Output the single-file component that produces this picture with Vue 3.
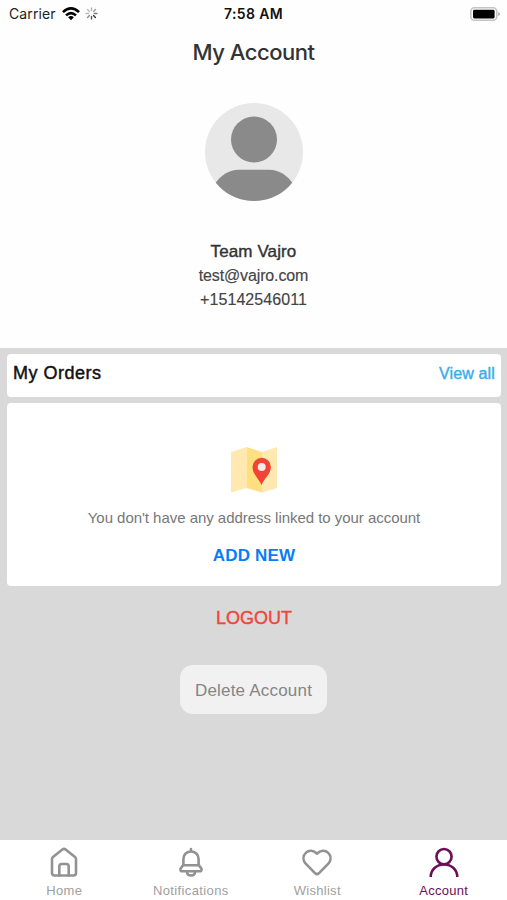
<script setup>
const spokes = [0, 1, 2, 3, 4, 5, 6, 7].map((i) => ({
  angle: i * 45,
  shade: [0.35, 0.45, 0.6, 0.9, 0.75, 0.5, 0.3, 0.3][i],
}))
const tabs = [
  { id: 'home', label: 'Home' },
  { id: 'notifications', label: 'Notifications' },
  { id: 'wishlist', label: 'Wishlist' },
  { id: 'account', label: 'Account' },
]
const active = 'account'
</script>

<template>
  <div class="screen">
    <header class="status">
      <div class="carrier">
        <span>Carrier</span>
        <svg class="wifi" width="18" height="14" viewBox="0 0 18 14">
          <g fill="none" stroke="#000" stroke-width="2.6">
            <path d="M1 5.1Q9-2.3 17 5.1" />
            <path d="M4 8.4Q9 3.8 14 8.4" />
          </g>
          <path d="M6.1 10.2Q9 7.7 11.9 10.2L9 13.3Z" />
        </svg>
        <svg class="spinner" width="13" height="13" viewBox="-6.5 -6.5 13 13">
          <line
            v-for="s in spokes"
            :key="s.angle"
            x1="0" y1="-2.9" x2="0" y2="-5.5"
            stroke="#222" stroke-width="1.4" stroke-linecap="round"
            :opacity="s.shade"
            :transform="`rotate(${s.angle})`"
          />
        </svg>
      </div>
      <span class="time">7:58 AM</span>
      <div class="power">
        <svg width="30" height="14" viewBox="0 0 30 14">
          <rect x=".8" y=".8" width="26" height="12.4" rx="3.8" fill="#fff" stroke="#c4c4c4" stroke-width="1.6" />
          <rect x="3" y="2.8" width="21.6" height="8.6" rx="1.4" />
          <path d="M28.2 4.9Q30 5.6 30 7T28.2 9.1Z" fill="#aaa" />
        </svg>
      </div>
    </header>

    <h1 class="title">My Account</h1>

    <section class="profile">
      <svg class="avatar" width="98" height="98" viewBox="0 0 98 98">
        <defs><clipPath id="disc"><circle cx="49" cy="49" r="49" /></clipPath></defs>
        <g clip-path="url(#disc)">
          <rect width="98" height="98" fill="#e8e8e8" />
          <circle cx="49" cy="36.500" r="23" fill="#8a8a8a" />
          <path d="M9 82C16 72 24 66.800 34 66.800H64C74 66.800 82 72 89 82V98H9Z" fill="#8a8a8a" />
        </g>
      </svg>
      <p class="name">Team Vajro</p>
      <p class="email">test@vajro.com</p>
      <p class="phone">+15142546011</p>
    </section>

    <main class="content">
      <section class="card orders">
        <h2>My Orders</h2>
        <a class="view">View all</a>
      </section>
      <section class="card address">
        <svg class="map" width="46" height="46" viewBox="0 0 46 46">
          <path d="M0 5L15.500 0V41L0 45.500Z" fill="#ffe9b0" />
          <path d="M15.500 0L31 5V45.500L15.500 41Z" fill="#ffdf80" />
          <path d="M31 5L46 0V41L31 45.500Z" fill="#ffe9b0" />
          <path d="M30.500 38C27.500 31 21.500 27 21.500 20A9.200 9.200 0 0 1 39.900 20C39.900 27 33.500 31 30.500 38Z" fill="#f04435" />
          <circle cx="30.700" cy="20" r="4" fill="#fbe9e7" />
        </svg>
        <p class="empty">You don't have any address linked to your account</p>
        <a class="add">ADD NEW</a>
      </section>
      <a class="logout">LOGOUT</a>
      <button class="delete">Delete Account</button>
    </main>

    <nav class="tabs">
      <a v-for="tab in tabs" :key="tab.id" class="tab" :class="{ active: tab.id === active }">
        <svg width="32" height="32" viewBox="0 0 32 32" fill="none" stroke="currentColor" stroke-width="2.6" stroke-linejoin="round" stroke-linecap="round">
          <template v-if="tab.id === 'home'">
            <path d="M4 12.200Q4 10.900 5 10L14.400 2.500Q16 1.300 17.600 2.500L27 10Q28 10.900 28 12.200V26Q28 28.500 25.500 28.500H6.500Q4 28.500 4 26Z" />
            <path d="M11.300 28.500V19.500Q11.300 17 13.800 17H18.200Q20.700 17 20.700 19.500V28.500" />
          </template>
          <template v-else-if="tab.id === 'notifications'">
            <path d="M16 2V4.500M8.400 18V12C8.400 7.500 11.800 4.500 16 4.500S23.600 7.500 23.600 12V18" />
            <path d="M8 18.300H24L26.500 21.800V22.800Q26.500 24.300 25 24.300H7Q5.500 24.300 5.500 22.800V21.800Z" />
            <path d="M12 24.700C12 27.200 13.500 28.500 16 28.500S20 27.200 20 24.700" />
          </template>
          <path v-else-if="tab.id === 'wishlist'" d="M16 6.700C12.500 2.900 7.700 3 5 5.700C2 8.700 1.700 13 4.200 16.200L14.200 26.300Q16 27.900 17.800 26.300L27.800 16.200C30.300 13 30 8.700 27 5.700C24.300 3 19.500 2.900 16 6.700Z" />
          <template v-else>
            <circle cx="16" cy="9.600" r="7.600" />
            <path stroke-linecap="butt" d="M2.700 30C2.700 22.700 8.500 17.500 16 17.500S29.300 22.700 29.300 30" />
          </template>
        </svg>
        <span :class="tab.id">{{ tab.label }}</span>
      </a>
    </nav>
  </div>
</template>

<style>
body { margin: 0; background: #fff; }
</style>

<style scoped>
.screen {
  display: flex;
  flex-direction: column;
  width: 507px;
  height: 900px;
  overflow: hidden;
  background: #fefefe;
  font-family: "Liberation Sans", Arial, sans-serif;
  color: #333;
}
p, h1, h2 { margin: 0; font-weight: 400; }
.status {
  display: grid;
  grid-template-columns: 1fr auto 1fr;
  align-items: center;
  height: 27px;
  padding: 0 7px 0 9px;
  font: 14px/27px Inter, sans-serif;
  color: #222;
}
.carrier { display: flex; align-items: center; letter-spacing: .1px; }
.wifi { margin-left: 6px; }
.spinner { margin-left: 5px; }
.time { margin-right: 2px; font-weight: 600; font-size: 14px; letter-spacing: .35px; color: #111; }
.power { display: flex; justify-content: flex-end; }
.title {
  height: 50px;
  text-align: center;
  font: 500 22px/50px Inter, sans-serif;
  letter-spacing: -.5px;
  color: #333;
}
.profile {
  display: flex;
  flex-direction: column;
  align-items: center;
  height: 271px;
  padding-top: 26px;
  box-sizing: border-box;
}
.avatar { display: block; margin-bottom: 39px; flex: none; }
.profile p { line-height: 24px; font-size: 16px; color: #444; }
.profile .name { font-size: 17px; letter-spacing: .12px; color: #333; -webkit-text-stroke: .4px #333; }
.profile .email { letter-spacing: -.14px; -webkit-text-stroke: .15px #444; }
.profile .phone { letter-spacing: .06px; -webkit-text-stroke: .15px #444; }
.content {
  flex: 1;
  display: flex;
  flex-direction: column;
  align-items: center;
  padding: 6px 6px 0 7px;
  background: #d9d9d9;
}
.card { align-self: stretch; border-radius: 4px; background: #fff; }
.orders {
  display: flex;
  justify-content: space-between;
  align-items: flex-start;
  height: 43px;
  padding: 0 6px;
  margin-bottom: 6px;
  line-height: 39px;
}
.orders h2 { font-size: 18px; letter-spacing: .5px; color: #111; -webkit-text-stroke: .45px #111; }
.view { line-height: 40px; font-size: 16px; letter-spacing: .15px; color: #38adec; -webkit-text-stroke: .4px #38adec; }
.address {
  display: flex;
  flex-direction: column;
  align-items: center;
  height: 183px;
  box-sizing: border-box;
  padding-top: 44px;
}
.map { margin-bottom: 13px; }
.empty { font-size: 15px; line-height: 24px; letter-spacing: -.035px; color: #777; }
.add { margin-top: 14px; font-weight: 700; font-size: 17px; line-height: 24px; letter-spacing: .15px; color: #087df5; }
.logout { margin-top: 20px; font-size: 18px; line-height: 24px; color: #f1443a; -webkit-text-stroke: .4px #f1443a; }
.delete {
  margin: 35px 1px 0 0;
  width: 147px;
  height: 49px;
  padding: 2px 0 0;
  border: 0;
  border-radius: 13px;
  background: #f1f1f1;
  font: 17px "Liberation Sans", sans-serif;
  letter-spacing: .2px;
  color: #858585;
}
.tabs { display: grid; grid-template-columns: repeat(4, 1fr); height: 60px; padding-left: 1px; background: #fff; }
.tab { display: flex; flex-direction: column; align-items: center; padding-top: 7px; color: #929292; }
.tab span { margin-top: 4px; font-size: 13px; line-height: 16px; letter-spacing: .3px; color: #a0a0a0; }
.tab .notifications { letter-spacing: .38px; }
.tab.active, .tab.active span { color: #6b0f58; }
</style>
